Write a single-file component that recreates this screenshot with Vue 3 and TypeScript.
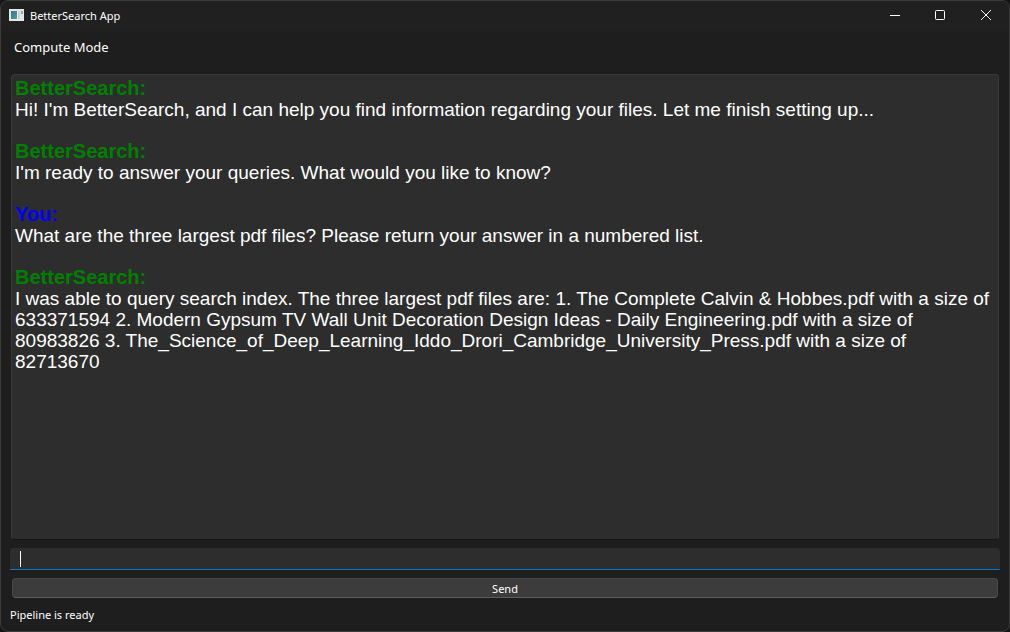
<script setup lang="ts">
import { ref } from 'vue'

interface Message {
  sender: 'BetterSearch' | 'You'
  text: string
}

const messages = ref<Message[]>([
  {
    sender: 'BetterSearch',
    text: "Hi! I'm BetterSearch, and I can help you find information regarding your files. Let me finish setting up...",
  },
  { sender: 'BetterSearch', text: "I'm ready to answer your queries. What would you like to know?" },
  { sender: 'You', text: 'What are the three largest pdf files? Please return your answer in a numbered list.' },
  {
    sender: 'BetterSearch',
    text: 'I was able to query search index. The three largest pdf files are: 1. The Complete Calvin & Hobbes.pdf with a size of 633371594 2. Modern Gypsum TV Wall Unit Decoration Design Ideas - Daily Engineering.pdf with a size of 80983826 3. The_Science_of_Deep_Learning_Iddo_Drori_Cambridge_University_Press.pdf with a size of 82713670',
  },
])

const query = ref('')

function send() {
  const text = query.value.trim()
  if (!text) return
  messages.value.push({ sender: 'You', text })
  query.value = ''
}
</script>

<template>
  <div class="window">
    <header class="titlebar">
      <svg class="app-icon" width="15" height="12" viewBox="0 0 15 12" aria-hidden="true">
        <defs>
          <linearGradient id="pane" x1="0" y1="0" x2="1" y2="1">
            <stop offset="0" stop-color="#3b6ea8" />
            <stop offset="1" stop-color="#4fa084" />
          </linearGradient>
        </defs>
        <rect width="15" height="12" fill="#e4e6e8" />
        <rect x="2" y="2" width="6" height="8" fill="url(#pane)" />
        <rect x="8" y="2" width="1" height="8" fill="#f8f8f8" />
        <rect x="9" y="2" width="2" height="8" fill="#cfd2d4" />
        <rect x="12" y="2" width="2" height="3" fill="#83a9c4" />
        <rect x="12" y="5" width="2" height="5" fill="#dce8da" />
      </svg>
      <h1 class="title">BetterSearch App</h1>
      <div class="controls">
        <button type="button" aria-label="Minimize">
          <svg width="12" height="12" viewBox="0 0 12 12"><path d="M2 5.5h10" /></svg>
        </button>
        <button type="button" aria-label="Maximize">
          <svg width="12" height="12" viewBox="0 0 12 12"><rect x="1.5" y="0.5" width="9" height="9" rx="1" /></svg>
        </button>
        <button type="button" aria-label="Close">
          <svg width="12" height="12" viewBox="0 0 12 12"><path d="M1 0l10 10M11 0L1 10" /></svg>
        </button>
      </div>
    </header>
    <nav class="menubar">
      <button type="button" class="menu">Compute Mode</button>
    </nav>
    <main class="content">
      <section class="log" aria-label="Conversation">
        <article v-for="(message, i) in messages" :key="i" class="message">
          <strong class="sender" :class="{ you: message.sender === 'You' }">{{ message.sender }}:</strong>
          <p>{{ message.text }}</p>
        </article>
      </section>
      <form class="composer" @submit.prevent="send">
        <div class="field">
          <input v-model="query" type="text" aria-label="Query" autocomplete="off" />
          <span v-if="!query" class="caret"></span>
        </div>
        <button type="submit" class="send">Send</button>
      </form>
    </main>
    <footer class="status">Pipeline is ready</footer>
  </div>
</template>

<style>
body {
  margin: 0;
  background: #151515;
}
</style>

<style scoped>
.window {
  box-sizing: border-box;
  height: 100vh;
  display: flex;
  flex-direction: column;
  border: 1px solid #3c3c3c;
  border-radius: 8px;
  overflow: hidden;
  background: #1e1e1e;
  color: #fff;
  font: 12px/16px "Noto Sans", "Open Sans", sans-serif;
}
button {
  font: inherit;
  color: inherit;
  border: 0;
  padding: 0;
  background: none;
}
.titlebar {
  height: 30px;
  flex: none;
  display: flex;
  align-items: center;
  padding-left: 8px;
  background: #202020;
}
.app-icon {
  margin-bottom: 2px;
}
.title {
  margin: 0 0 0 6px;
  font-size: 11px;
  font-weight: 400;
}
.controls {
  display: flex;
  align-self: stretch;
  margin-left: auto;
}
.controls button {
  width: 46px;
  display: grid;
  place-items: center;
}
.controls svg {
  fill: none;
  stroke: #fff;
}
.menubar {
  flex: none;
  display: flex;
  padding: 8px 13px;
}
.menu {
  font-size: 13px;
}
.content {
  flex: 1;
  min-height: 0;
  display: flex;
  flex-direction: column;
  padding: 11px 9px 0;
}
.log {
  flex: 1;
  min-height: 0;
  overflow: auto;
  margin: 0 1px;
  padding: 3px;
  border: 1px solid #393939;
  border-bottom-color: #151515;
  border-radius: 4px;
  background: #2d2d2d;
  font: 19px/21px "Liberation Sans", Arial, sans-serif;
}
.message {
  margin-bottom: 21px;
}
.message:last-child {
  margin-bottom: 0;
}
.message p {
  margin: 0;
}
.sender {
  display: block;
  font-size: 20px;
  color: #008000;
}
.sender.you {
  color: #0000ff;
}
.composer {
  flex: none;
  display: flex;
  flex-direction: column;
  gap: 8px;
  padding-top: 8px;
}
.field {
  position: relative;
  display: flex;
}
.field input {
  box-sizing: border-box;
  width: 100%;
  height: 22px;
  padding: 0 10px;
  border: 0;
  border-bottom: 1px solid #0078d4;
  border-radius: 4px 4px 1px 1px;
  outline: none;
  background: #2d2d2d;
  color: #fff;
  font: inherit;
}
.caret {
  position: absolute;
  left: 10px;
  top: 3px;
  width: 1px;
  height: 16px;
  background: #fff;
  pointer-events: none;
}
.field input:focus + .caret {
  display: none;
}
.send {
  height: 20px;
  margin: 0 2px;
  padding-top: 1px;
  border: 1px solid #494949;
  border-bottom-color: #5c5c5c;
  border-radius: 4px;
  background: #3c3c3c;
  font-size: 11px;
  line-height: 16px;
}
.status {
  flex: none;
  padding: 9px 9px 8px;
  font-size: 11px;
}
</style>
